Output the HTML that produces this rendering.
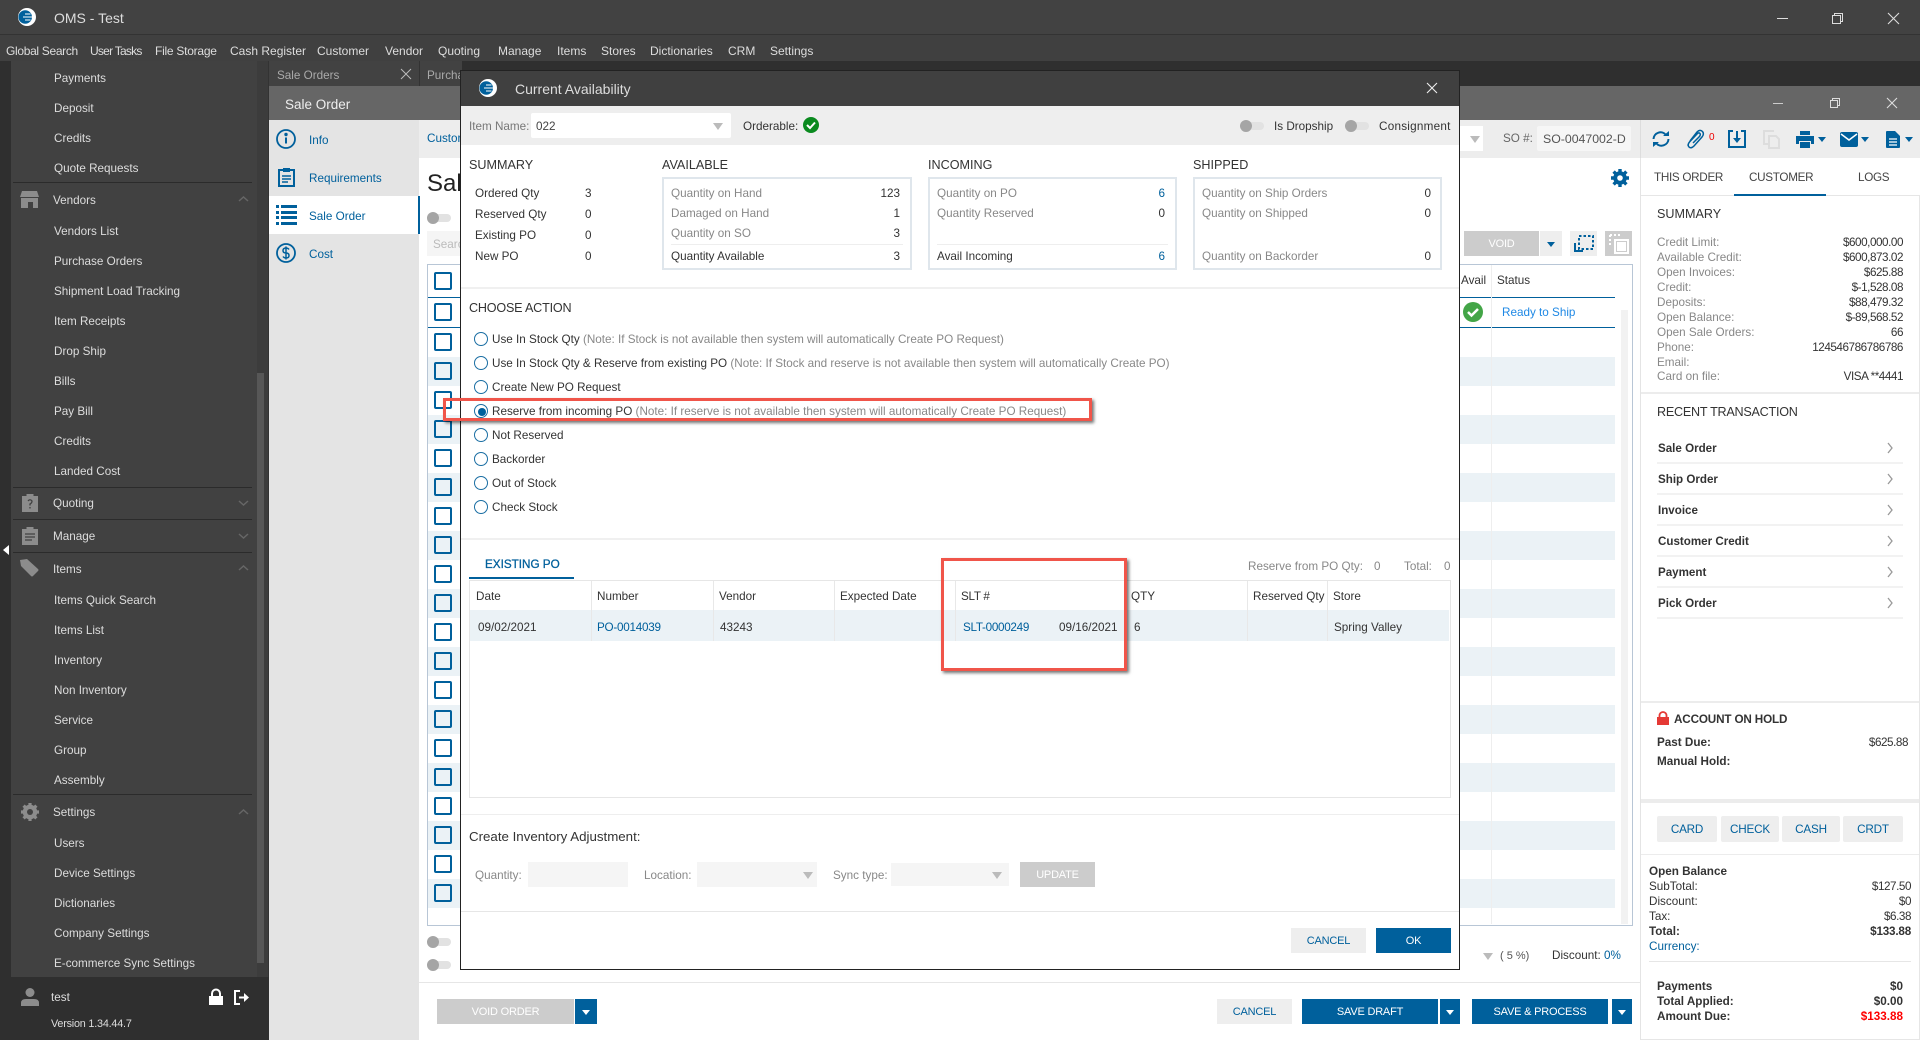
<!DOCTYPE html>
<html><head><meta charset="utf-8"><title>OMS - Test</title>
<style>
html,body{margin:0;padding:0;width:1920px;height:1040px;overflow:hidden;background:#fff;font-family:"Liberation Sans",sans-serif;font-size:12px;color:#333}
.b{position:absolute}
.t{position:absolute;white-space:nowrap;line-height:16px;font-size:11.7px;margin-top:1px}
.s{color:#ddd}
.g{color:#888}
.bl{color:#00609c}
.h{font-size:12.6px;color:#333;margin-top:0}
.bd{font-weight:bold;color:#333}
.v{letter-spacing:-.45px}
.n{font-size:12px;margin-top:0}
.c{text-align:center;line-height:27px;position:absolute;white-space:nowrap;font-size:11px;letter-spacing:-.2px}
.cb{position:absolute;left:434px;width:14px;height:14px;border:2px solid #00609c;border-radius:2px;background:transparent}
.st{position:absolute;left:428px;width:1187px;height:29px;background:#ebf2f6}
.tg{position:absolute;width:24px;height:8px;background:#e2e2e2;border-radius:4px}
.tg:before{content:"";position:absolute;left:0;top:-2px;width:12px;height:12px;border-radius:6px;background:#a5a5a5}
.r{position:absolute;left:474px;width:12px;height:12px;border:1.5px solid #1a6ea3;border-radius:50%;background:#fff}
.rt{font-weight:bold;font-size:11.6px;color:#333}
.rl{position:absolute;left:1657px;width:246px;height:2px;background:#f2f2f2}
svg{position:absolute;overflow:visible}
</style></head><body>

<!-- top bars -->
<div class="b" style="left:0;top:0;width:1920px;height:34px;background:#424242"></div>
<div class="b" style="left:0;top:34px;width:1920px;height:1px;background:#333"></div>
<div class="b" style="left:0;top:35px;width:1920px;height:26px;background:#404040"></div>
<div class="b" style="left:0;top:61px;width:1920px;height:25px;background:#2f2f2f"></div>
<svg style="left:18px;top:8px" width="18" height="18" viewBox="0 0 18 18"><circle cx="9" cy="9" r="9" fill="#fff"/><circle cx="7.200" cy="9" r="6.800" fill="#00609c"/><path d="M7 6h5.500M5 9h9M7 12h5.500" stroke="#fff" stroke-width="1.100"/></svg>
<div class="t" style="left:54px;top:10px;font-size:14px;color:#ddd;margin-top:0">OMS - Test</div>
<div class="b" style="left:1777px;top:18px;width:11px;height:1px;background:#ddd"></div>
<svg style="left:1832px;top:13px" width="11" height="11" fill="none" stroke="#ddd"><path d="M.5 2.500h8v8h-8zM2.500 2.500v-2h8v8h-2"/></svg>
<svg style="left:1888px;top:13px" width="11" height="11" stroke="#ddd" stroke-width="1.100"><path d="M0 0L11 11M11 0L0 11"/></svg>
<div class="t s n" style="left:6px;top:43px;letter-spacing:-.32px">Global Search</div>
<div class="t s n" style="left:90px;top:43px;letter-spacing:-.75px">User Tasks</div>
<div class="t s n" style="left:155px;top:43px;letter-spacing:-.25px">File Storage</div>
<div class="t s n" style="left:230px;top:43px">Cash Register</div>
<div class="t s n" style="left:317px;top:43px">Customer</div>
<div class="t s n" style="left:385px;top:43px">Vendor</div>
<div class="t s n" style="left:438px;top:43px">Quoting</div>
<div class="t s n" style="left:498px;top:43px">Manage</div>
<div class="t s n" style="left:557px;top:43px">Items</div>
<div class="t s n" style="left:601px;top:43px">Stores</div>
<div class="t s n" style="left:650px;top:43px">Dictionaries</div>
<div class="t s n" style="left:728px;top:43px">CRM</div>
<div class="t s n" style="left:770px;top:43px">Settings</div>

<!-- sidebar -->
<div class="b" style="left:0;top:61px;width:269px;height:979px;background:#414141"></div>
<div class="b" style="left:0;top:61px;width:11px;height:979px;background:#2f2f2f"></div>
<div class="b" style="left:257px;top:61px;width:12px;height:916px;background:#3c3c3c"></div>
<div class="b" style="left:257px;top:373px;width:7px;height:590px;background:#575757"></div>
<div class="b" style="left:268px;top:61px;width:1px;height:979px;background:#333"></div>
<div class="b" style="left:11px;top:977px;width:258px;height:63px;background:#2f2f2f"></div>
<div class="b" style="left:0;top:545px;width:0;height:0;border:5px solid transparent;border-right:6px solid #fff;border-left:0;margin-left:3px"></div>
<div class="b" style="left:13px;top:182px;width:239px;height:1px;background:#2b2b2b"></div>
<div class="b" style="left:13px;top:794px;width:239px;height:1px;background:#2b2b2b"></div>
<div class="t s" style="left:54px;top:70px">Payments</div>
<div class="t s" style="left:54px;top:100px">Deposit</div>
<div class="t s" style="left:54px;top:130px">Credits</div>
<div class="t s" style="left:54px;top:160px">Quote Requests</div>
<svg style="left:20px;top:191px" width="19" height="17" fill="#8c8c8c"><path d="M2 0h15l2 6H0zM1 7h17v10h-5v-6H8v6H1z"/></svg>
<div class="t s" style="left:53px;top:192px">Vendors</div>
<svg style="left:238px;top:196px" width="11" height="6" fill="none" stroke="#666" stroke-width="1.500"><path d="M1 5L5.500 1L10 5"/></svg>
<div class="t s" style="left:54px;top:223px">Vendors List</div>
<div class="t s" style="left:54px;top:253px">Purchase Orders</div>
<div class="t s" style="left:54px;top:283px">Shipment Load Tracking</div>
<div class="t s" style="left:54px;top:313px">Item Receipts</div>
<div class="t s" style="left:54px;top:343px">Drop Ship</div>
<div class="t s" style="left:54px;top:373px">Bills</div>
<div class="t s" style="left:54px;top:403px">Pay Bill</div>
<div class="t s" style="left:54px;top:433px">Credits</div>
<div class="t s" style="left:54px;top:463px">Landed Cost</div>
<div class="b" style="left:13px;top:487px;width:239px;height:1px;background:#2b2b2b"></div>
<svg style="left:22px;top:494px" width="16" height="18" fill="#8c8c8c"><path d="M0 2h4.500V0h7v2H16v16H0z"/><path d="M6 7q2-2.500 4 0q0 2-2 3v1.500M8 13v1.500" stroke="#414141" fill="none" stroke-width="1.300"/></svg>
<div class="t s" style="left:53px;top:495px">Quoting</div>
<svg style="left:238px;top:500px" width="11" height="6" fill="none" stroke="#666" stroke-width="1.500"><path d="M1 1L5.500 5L10 1"/></svg>
<div class="b" style="left:13px;top:519px;width:239px;height:1px;background:#2b2b2b"></div>
<svg style="left:22px;top:527px" width="16" height="18" fill="#8c8c8c"><path d="M0 2h4.500V0h7v2H16v16H0z"/><path d="M3 7h10M3 10h10M3 13h7" stroke="#414141" stroke-width="1.300"/></svg>
<div class="t s" style="left:53px;top:528px">Manage</div>
<svg style="left:238px;top:533px" width="11" height="6" fill="none" stroke="#666" stroke-width="1.500"><path d="M1 1L5.500 5L10 1"/></svg>
<div class="b" style="left:13px;top:552px;width:239px;height:1px;background:#2b2b2b"></div>
<svg style="left:20px;top:559px" width="19" height="18" fill="#8c8c8c"><path d="M0 1l7-1 11 10q1 1 0 2l-5 5q-1 1-2 0L1 7z"/></svg>
<div class="t s" style="left:53px;top:561px">Items</div>
<svg style="left:238px;top:565px" width="11" height="6" fill="none" stroke="#666" stroke-width="1.500"><path d="M1 5L5.500 1L10 5"/></svg>
<div class="t s" style="left:54px;top:592px">Items Quick Search</div>
<div class="t s" style="left:54px;top:622px">Items List</div>
<div class="t s" style="left:54px;top:652px">Inventory</div>
<div class="t s" style="left:54px;top:682px">Non Inventory</div>
<div class="t s" style="left:54px;top:712px">Service</div>
<div class="t s" style="left:54px;top:742px">Group</div>
<div class="t s" style="left:54px;top:772px">Assembly</div>
<svg style="left:21px;top:803px" width="18" height="18" viewBox="0 0 18 18"><circle cx="9" cy="9" r="5.500" fill="none" stroke="#8c8c8c" stroke-width="3.500"/><path d="M9 0v18M0 9h18M2.600 2.600l12.800 12.800M15.400 2.600L2.600 15.400" stroke="#8c8c8c" stroke-width="3.200"/><circle cx="9" cy="9" r="3" fill="#414141"/></svg>
<div class="t s" style="left:53px;top:804px">Settings</div>
<svg style="left:238px;top:809px" width="11" height="6" fill="none" stroke="#666" stroke-width="1.500"><path d="M1 5L5.500 1L10 5"/></svg>
<div class="t s" style="left:54px;top:835px">Users</div>
<div class="t s" style="left:54px;top:865px">Device Settings</div>
<div class="t s" style="left:54px;top:895px">Dictionaries</div>
<div class="t s" style="left:54px;top:925px">Company Settings</div>
<div class="t s" style="left:54px;top:955px">E-commerce Sync Settings</div>
<svg style="left:21px;top:988px" width="18" height="18" fill="#8c8c8c"><circle cx="9" cy="4.500" r="4.500"/><path d="M0 18v-3q0-4 5-4h8q5 0 5 4v3z"/></svg>
<div class="t" style="left:51px;top:989px;color:#ddd">test</div>
<div class="t" style="left:51px;top:1015px;color:#ddd;font-size:10.800px;letter-spacing:-.2px">Version 1.34.44.7</div>
<svg style="left:209px;top:989px" width="14" height="16" fill="#fff"><path d="M0 7h14v9H0z"/><path d="M3 7V4.500a4 4 0 0 1 8 0V7" fill="none" stroke="#fff" stroke-width="2"/></svg>
<svg style="left:234px;top:990px" width="16" height="15" fill="none" stroke="#fff" stroke-width="2"><path d="M6 1H1v13h5M5 7.500h7"/><path d="M10 3l5 4.500-5 4.500z" fill="#fff" stroke="none"/></svg>

<!-- tabs -->
<div class="b" style="left:269px;top:61px;width:150px;height:25px;background:#424242"></div>
<div class="b" style="left:419px;top:61px;width:42px;height:25px;background:#424242;border-left:1px solid #333"></div>
<div class="t" style="left:277px;top:67px;color:#aaa">Sale Orders</div>
<svg style="left:401px;top:69px" width="10" height="10" stroke="#bbb"><path d="M0 0L10 10M10 0L0 10"/></svg>
<div class="t" style="left:427px;top:67px;color:#aaa">Purcha</div>

<!-- window header -->
<div class="b" style="left:269px;top:86px;width:1651px;height:34px;background:#666"></div>
<div class="t" style="left:285px;top:96px;color:#eee;font-size:13.500px">Sale Order</div>
<div class="b" style="left:1773px;top:103px;width:10px;height:1px;background:#ccc"></div>
<svg style="left:1830px;top:98px" width="10" height="10" fill="none" stroke="#ddd"><path d="M.5 2.500h7v7h-7zM2.500 2.500v-2h7v7h-2"/></svg>
<svg style="left:1887px;top:98px" width="10" height="10" stroke="#ddd" stroke-width="1.100"><path d="M0 0L10 10M10 0L0 10"/></svg>

<!-- left nav -->
<div class="b" style="left:269px;top:120px;width:150px;height:920px;background:#e4e4e4"></div>
<div class="b" style="left:269px;top:196px;width:149px;height:38px;background:#fff;border-right:2px solid #00609c"></div>
<svg style="left:276px;top:129px" width="20" height="20" viewBox="0 0 20 20" fill="none" stroke="#00609c" stroke-width="1.800"><circle cx="10" cy="10" r="9"/><path d="M10 8.500v6" stroke-width="2"/><circle cx="10" cy="5.500" r=".8" fill="#00609c"/></svg>
<div class="t bl" style="left:309px;top:132px">Info</div>
<svg style="left:278px;top:167px" width="17" height="20" viewBox="0 0 17 20" fill="none" stroke="#00609c" stroke-width="2"><path d="M5 3H1v16h15V3h-4"/><path d="M5 1h7v4H5z" fill="#00609c" stroke="none"/><path d="M4 9h9M4 12h9M4 15h6" stroke-width="1.500"/></svg>
<div class="t bl" style="left:309px;top:170px">Requirements</div>
<svg style="left:276px;top:205px" width="21" height="20" fill="#00609c"><path d="M0 0h3v3H0zM5 0h16v3H5zM0 6h3v3H0zM5 6h16v3H5zM0 11h3v3H0zM5 11h16v3H5zM0 17h3v3H0zM5 17h16v3H5z"/></svg>
<div class="t bl" style="left:309px;top:208px">Sale Order</div>
<svg style="left:276px;top:243px" width="20" height="20" viewBox="0 0 20 20" fill="none" stroke="#00609c" stroke-width="1.800"><circle cx="10" cy="10" r="9"/><path d="M13 6.500Q12 5 10 5Q7 5 7 7.500Q7 10 10 10Q13 10 13 12.500Q13 15 10 15Q8 15 7 13.500M10 3.500v13" stroke-width="1.500"/></svg>
<div class="t bl" style="left:309px;top:246px">Cost</div>

<!-- main behind -->
<div class="b" style="left:419px;top:120px;width:1221px;height:38px;background:#ededed"></div>
<div class="t bl" style="left:427px;top:130px">Custor</div>
<div class="t" style="left:427px;top:168px;font-size:24px;line-height:32px;color:#222;margin-top:0">Sal</div>
<div class="tg" style="left:427px;top:214px"></div>
<div class="b" style="left:427px;top:231px;width:40px;height:25px;background:#f5f5f5"></div>
<div class="t" style="left:433px;top:236px;color:#bbb">Searc</div>
<div class="b" style="left:427px;top:264px;width:1204px;height:660px;border:1px solid #b8c6d6;background:#fff"></div>
<div class="b" style="left:428px;top:297px;width:1187px;height:1px;background:#00609c"></div>
<div class="b" style="left:428px;top:327px;width:1187px;height:1px;background:#00609c"></div>
<div class="st" style="top:357px"></div><div class="st" style="top:415px"></div><div class="st" style="top:473px"></div><div class="st" style="top:531px"></div><div class="st" style="top:589px"></div><div class="st" style="top:647px"></div><div class="st" style="top:705px"></div><div class="st" style="top:763px"></div><div class="st" style="top:821px"></div><div class="st" style="top:879px"></div>
<div class="b" style="left:1491px;top:265px;width:1px;height:659px;background:#eee"></div>
<div class="cb" style="top:272px"></div><div class="cb" style="top:303px"></div><div class="cb" style="top:333px"></div><div class="cb" style="top:362px"></div><div class="cb" style="top:391px"></div><div class="cb" style="top:420px"></div><div class="cb" style="top:449px"></div><div class="cb" style="top:478px"></div><div class="cb" style="top:507px"></div><div class="cb" style="top:536px"></div><div class="cb" style="top:565px"></div><div class="cb" style="top:594px"></div><div class="cb" style="top:623px"></div><div class="cb" style="top:652px"></div><div class="cb" style="top:681px"></div><div class="cb" style="top:710px"></div><div class="cb" style="top:739px"></div><div class="cb" style="top:768px"></div><div class="cb" style="top:797px"></div><div class="cb" style="top:826px"></div><div class="cb" style="top:855px"></div><div class="cb" style="top:884px"></div>
<div class="tg" style="left:427px;top:938px"></div>
<div class="tg" style="left:427px;top:961px"></div>
<div class="t" style="left:1461px;top:272px;color:#333">Avail</div>
<div class="t" style="left:1497px;top:272px;color:#333">Status</div>
<svg style="left:1463px;top:302px" width="20" height="20"><circle cx="10" cy="10" r="10" fill="#43a547"/><path d="M5 10l3.500 3.500L15 7" fill="none" stroke="#fff" stroke-width="2.500"/></svg>
<div class="t" style="left:1502px;top:304px;color:#1e88e5">Ready to Ship</div>
<div class="b" style="left:1621px;top:310px;width:7px;height:614px;background:#f2f2f2"></div>
<div class="b" style="left:1460px;top:126px;width:23px;height:25px;background:#fff"></div>
<div class="b" style="left:1470px;top:136px;width:0;height:0;border:5px solid transparent;border-top:7px solid #bbb"></div>
<div class="t" style="left:1503px;top:130px;color:#666">SO #:</div>
<div class="b" style="left:1537px;top:126px;width:94px;height:25px;background:#f6f6f6;border-radius:2px"></div>
<div class="t" style="left:1543px;top:130px;color:#555;font-size:12.300px">SO-0047002-D</div>
<svg style="left:1611px;top:169px" width="18" height="18" viewBox="0 0 18 18"><path d="M9 0v18M0 9h18M2.600 2.600l12.800 12.800M15.400 2.600L2.600 15.400" stroke="#00609c" stroke-width="3.400"/><circle cx="9" cy="9" r="5" fill="none" stroke="#00609c" stroke-width="3.500"/><circle cx="9" cy="9" r="2.800" fill="#fff"/></svg>
<div class="b c" style="left:1464px;top:231px;width:75px;height:25px;background:#ccc;color:#fff">VOID</div>
<div class="b" style="left:1540px;top:231px;width:22px;height:25px;background:#eee"></div>
<div class="b" style="left:1547px;top:242px;width:0;height:0;border:4px solid transparent;border-top:5px solid #00609c"></div>
<div class="b" style="left:1570px;top:231px;width:27px;height:25px;background:#eee"></div>
<svg style="left:1574px;top:234px" width="20" height="19" fill="none" stroke="#00609c" stroke-width="2"><path d="M1 9v8h8" /><path d="M5 2h14v13H5z" stroke-dasharray="2.500 2"/></svg>
<div class="b" style="left:1605px;top:231px;width:27px;height:25px;background:#ccc"></div>
<svg style="left:1609px;top:234px" width="20" height="20" fill="none" stroke="#fff" stroke-width="2"><path d="M1 1h12" stroke-dasharray="2 2"/><path d="M1 1v12" stroke-dasharray="2 2"/><path d="M6 6h13v13H6z"/><path d="M8 8h9v9H8z" fill="#fff" stroke="none"/></svg>

<!-- bottom behind -->
<div class="b" style="left:419px;top:982px;width:1221px;height:1px;background:#e6e6e6"></div>
<div class="t" style="left:1500px;top:947px;color:#555;font-size:11px">( 5 %)</div>
<div class="b" style="left:1483px;top:953px;width:0;height:0;border:5px solid transparent;border-top:7px solid #bbb"></div>
<div class="t" style="left:1552px;top:947px;color:#333">Discount: <span class="bl">0%</span></div>
<div class="b c" style="left:437px;top:999px;width:137px;height:25px;background:#ccc;color:#fff">VOID ORDER</div>
<div class="b" style="left:575px;top:999px;width:22px;height:25px;background:#00609c"></div>
<div class="b" style="left:582px;top:1010px;width:0;height:0;border:4px solid transparent;border-top:5px solid #fff"></div>
<div class="b c bl" style="left:1217px;top:999px;width:75px;height:25px;background:#eee">CANCEL</div>
<div class="b c" style="left:1302px;top:999px;width:136px;height:25px;background:#00609c;color:#fff">SAVE DRAFT</div>
<div class="b" style="left:1440px;top:999px;width:20px;height:25px;background:#00609c"></div>
<div class="b" style="left:1446px;top:1010px;width:0;height:0;border:4px solid transparent;border-top:5px solid #fff"></div>
<div class="b c" style="left:1472px;top:999px;width:136px;height:25px;background:#00609c;color:#fff">SAVE &amp; PROCESS</div>
<div class="b" style="left:1612px;top:999px;width:20px;height:25px;background:#00609c"></div>
<div class="b" style="left:1618px;top:1010px;width:0;height:0;border:4px solid transparent;border-top:5px solid #fff"></div>

<!-- right panel -->
<div class="b" style="left:1640px;top:120px;width:280px;height:920px;background:#fff;border-left:1px solid #e4e4e4;box-sizing:border-box"></div>
<div class="b" style="left:1640px;top:120px;width:280px;height:38px;background:#ededed;border-left:1px solid #ddd;box-sizing:border-box"></div>
<svg style="left:1652px;top:131px" width="18" height="16" fill="none" stroke="#00609c" stroke-width="2"><path d="M1.500 8A7 7 0 0 1 14 4M16.500 8A7 7 0 0 1 4 12"/><path d="M11 5h6V0zM7 11H1v5z" fill="#00609c" stroke="none"/></svg>
<svg style="left:1687px;top:129px" width="18" height="20" fill="none" stroke="#00609c" stroke-width="1.500"><path d="M3 12L10 3Q13 0 15.500 2.500Q17.500 5 15 8L7 17Q4 20 2 18Q0 16 2.500 13L10 5Q12 3 13 4.500Q14 6 12 8L6 14"/></svg>
<div class="t" style="left:1709px;top:129px;color:#e00;font-size:10px">0</div>
<svg style="left:1728px;top:130px" width="18" height="18" fill="none" stroke="#00609c" stroke-width="2"><path d="M5 1H1v16h16V1h-4M9 1v10"/><path d="M5 8l4 5 4-5z" fill="#00609c" stroke="none"/></svg>
<svg style="left:1763px;top:130px" width="17" height="19" fill="none" stroke="#ddd" stroke-width="2"><path d="M11 1H1v13h4M6 6h7l3 3v9H6z"/></svg>
<svg style="left:1796px;top:131px" width="18" height="17" fill="#00609c"><path d="M4 0h10v4H4zM0 5h18v8h-3v-3H3v3H0zM4 11h10v6H4z"/></svg>
<div class="b" style="left:1818px;top:137px;width:0;height:0;border:4px solid transparent;border-top:5px solid #00609c"></div>
<svg style="left:1840px;top:132px" width="18" height="15" fill="#00609c"><rect width="18" height="15" rx="2"/><path d="M1 2l8 6 8-6" fill="none" stroke="#fff" stroke-width="1.500"/></svg>
<div class="b" style="left:1861px;top:137px;width:0;height:0;border:4px solid transparent;border-top:5px solid #00609c"></div>
<svg style="left:1886px;top:131px" width="14" height="17" fill="#00609c"><path d="M1 0h8l5 5v11q0 1-1 1H1q-1 0-1-1V1q0-1 1-1z"/><path d="M3 8h8M3 11h8M3 14h8" stroke="#fff" stroke-width="1.300"/></svg>
<div class="b" style="left:1905px;top:137px;width:0;height:0;border:4px solid transparent;border-top:5px solid #00609c"></div>
<div class="t" style="left:1654px;top:169px;color:#444;letter-spacing:-.3px">THIS ORDER</div>
<div class="t" style="left:1749px;top:169px;color:#444;letter-spacing:-.3px">CUSTOMER</div>
<div class="t" style="left:1858px;top:169px;color:#444;letter-spacing:-.3px">LOGS</div>
<div class="b" style="left:1641px;top:195px;width:279px;height:1px;background:#e6e6e6"></div>
<div class="b" style="left:1734px;top:194px;width:92px;height:2px;background:#00609c"></div>
<div class="t h" style="left:1657px;top:206px">SUMMARY</div>
<div class="t g" style="left:1657px;top:234px">Credit Limit:</div><div class="t v" style="right:17px;top:234px">$600,000.00</div>
<div class="t g" style="left:1657px;top:249px">Available Credit:</div><div class="t v" style="right:17px;top:249px">$600,873.02</div>
<div class="t g" style="left:1657px;top:264px">Open Invoices:</div><div class="t v" style="right:17px;top:264px">$625.88</div>
<div class="t g" style="left:1657px;top:279px">Credit:</div><div class="t v" style="right:17px;top:279px">$-1,528.08</div>
<div class="t g" style="left:1657px;top:294px">Deposits:</div><div class="t v" style="right:17px;top:294px">$88,479.32</div>
<div class="t g" style="left:1657px;top:309px">Open Balance:</div><div class="t v" style="right:17px;top:309px">$-89,568.52</div>
<div class="t g" style="left:1657px;top:324px">Open Sale Orders:</div><div class="t v" style="right:17px;top:324px">66</div>
<div class="t g" style="left:1657px;top:339px">Phone:</div><div class="t v" style="right:17px;top:339px">124546786786786</div>
<div class="t g" style="left:1657px;top:354px">Email:</div>
<div class="t g" style="left:1657px;top:368px">Card on file:</div><div class="t v" style="right:17px;top:368px">VISA **4441</div>
<div class="b" style="left:1641px;top:392px;width:279px;height:2px;background:#ececec"></div>
<div class="t h" style="left:1657px;top:404px;letter-spacing:-.25px">RECENT TRANSACTION</div>
<div class="t rt" style="left:1658px;top:440px">Sale Order</div>
<div class="t rt" style="left:1658px;top:471px">Ship Order</div>
<div class="t rt" style="left:1658px;top:502px">Invoice</div>
<div class="t rt" style="left:1658px;top:533px">Customer Credit</div>
<div class="t rt" style="left:1658px;top:564px">Payment</div>
<div class="t rt" style="left:1658px;top:595px">Pick Order</div>
<div class="rl" style="top:462px"></div>
<div class="rl" style="top:493px"></div>
<div class="rl" style="top:524px"></div>
<div class="rl" style="top:555px"></div>
<div class="rl" style="top:586px"></div>
<div class="rl" style="top:617px"></div>
<svg style="left:1887px;top:443px" width="6" height="10" fill="none" stroke="#999" stroke-width="1.300"><path d="M1 0l4 5-4 5"/></svg>
<svg style="left:1887px;top:474px" width="6" height="10" fill="none" stroke="#999" stroke-width="1.300"><path d="M1 0l4 5-4 5"/></svg>
<svg style="left:1887px;top:505px" width="6" height="10" fill="none" stroke="#999" stroke-width="1.300"><path d="M1 0l4 5-4 5"/></svg>
<svg style="left:1887px;top:536px" width="6" height="10" fill="none" stroke="#999" stroke-width="1.300"><path d="M1 0l4 5-4 5"/></svg>
<svg style="left:1887px;top:567px" width="6" height="10" fill="none" stroke="#999" stroke-width="1.300"><path d="M1 0l4 5-4 5"/></svg>
<svg style="left:1887px;top:598px" width="6" height="10" fill="none" stroke="#999" stroke-width="1.300"><path d="M1 0l4 5-4 5"/></svg>
<div class="b" style="left:1641px;top:701px;width:279px;height:2px;background:#ececec"></div>
<svg style="left:1657px;top:712px" width="12" height="13" fill="#e53935"><path d="M0 5h12v8H0z"/><path d="M2.500 5V3.500a3.500 3.500 0 0 1 7 0V5" fill="none" stroke="#e53935" stroke-width="1.800"/></svg>
<div class="t bd" style="left:1674px;top:711px;letter-spacing:-.15px">ACCOUNT ON HOLD</div>
<div class="t bd" style="left:1657px;top:734px">Past Due:</div><div class="t v" style="right:12px;top:734px">$625.88</div>
<div class="t bd" style="left:1657px;top:753px">Manual Hold:</div>
<div class="b" style="left:1641px;top:799px;width:279px;height:4px;background:#ececec"></div>
<div class="b c bl" style="left:1657px;top:816px;width:60px;height:26px;background:#eee;border-radius:2px;font-size:11.700px;line-height:27px">CARD</div>
<div class="b c bl" style="left:1721px;top:816px;width:58px;height:26px;background:#eee;border-radius:2px;font-size:11.700px;line-height:27px">CHECK</div>
<div class="b c bl" style="left:1782px;top:816px;width:58px;height:26px;background:#eee;border-radius:2px;font-size:11.700px;line-height:27px">CASH</div>
<div class="b c bl" style="left:1843px;top:816px;width:60px;height:26px;background:#eee;border-radius:2px;font-size:11.700px;line-height:27px">CRDT</div>
<div class="b" style="left:1641px;top:854px;width:279px;height:1px;background:#ececec"></div>
<div class="t bd" style="left:1649px;top:863px">Open Balance</div>
<div class="t" style="left:1649px;top:878px">SubTotal:</div><div class="t v" style="right:9px;top:878px">$127.50</div>
<div class="t" style="left:1649px;top:893px">Discount:</div><div class="t v" style="right:9px;top:893px">$0</div>
<div class="t" style="left:1649px;top:908px">Tax:</div><div class="t v" style="right:9px;top:908px">$6.38</div>
<div class="t bd" style="left:1649px;top:923px">Total:</div><div class="t bd" style="right:9px;top:923px;letter-spacing:-.2px">$133.88</div>
<div class="t bl" style="left:1649px;top:938px">Currency:</div>
<div class="b" style="left:1649px;top:961px;width:262px;height:1px;background:#e6e6e6"></div>
<div class="t bd" style="left:1657px;top:978px">Payments</div><div class="t bd" style="right:17px;top:978px">$0</div>
<div class="t bd" style="left:1657px;top:993px">Total Applied:</div><div class="t bd" style="right:17px;top:993px">$0.00</div>
<div class="t bd" style="left:1657px;top:1008px">Amount Due:</div><div class="t bd" style="right:17px;top:1008px;color:#f00">$133.88</div>
<div class="b" style="left:1641px;top:1039px;width:279px;height:1px;background:#e6e6e6"></div>
<div class="b" style="left:1919px;top:196px;width:1px;height:844px;background:#e6e6e6"></div>

<!-- MODAL -->
<div class="b" style="left:460px;top:70px;width:1000px;height:900px;background:#fff;border:1px solid #222;box-sizing:border-box"></div>
<div class="b" style="left:461px;top:71px;width:998px;height:35px;background:#404040"></div>
<div class="b" style="left:461px;top:106px;width:998px;height:39px;background:#eee"></div>
<svg style="left:479px;top:79px" width="18" height="18" viewBox="0 0 18 18"><circle cx="9" cy="9" r="9" fill="#fff"/><circle cx="7.200" cy="9" r="6.800" fill="#00609c"/><path d="M7 6h5.500M5 9h9M7 12h5.500" stroke="#fff" stroke-width="1.100"/></svg>
<div class="t" style="left:515px;top:81px;color:#ddd;font-size:14px;margin-top:0">Current Availability</div>
<svg style="left:1427px;top:83px" width="10" height="10" stroke="#eee" stroke-width="1.100"><path d="M0 0L10 10M10 0L0 10"/></svg>
<div class="t" style="left:469px;top:118px;color:#777">Item Name:</div>
<div class="b" style="left:531px;top:113px;width:200px;height:25px;background:#fff;border-radius:2px"></div>
<div class="t" style="left:536px;top:118px;color:#444">022</div>
<div class="b" style="left:713px;top:123px;width:0;height:0;border:5px solid transparent;border-top:7px solid #bbb"></div>
<div class="t" style="left:743px;top:118px;color:#333">Orderable:</div>
<svg style="left:803px;top:117px" width="16" height="16"><circle cx="8" cy="8" r="8" fill="#0a8a1f"/><path d="M4 8l3 3 5-5.500" fill="none" stroke="#fff" stroke-width="2"/></svg>
<div class="tg" style="left:1240px;top:122px"></div>
<div class="t" style="left:1274px;top:118px;color:#333">Is Dropship</div>
<div class="tg" style="left:1345px;top:122px"></div>
<div class="t" style="left:1379px;top:118px;color:#333;letter-spacing:.25px">Consignment</div>

<div class="t h" style="left:469px;top:157px">SUMMARY</div>
<div class="t h" style="left:662px;top:157px">AVAILABLE</div>
<div class="t h" style="left:928px;top:157px">INCOMING</div>
<div class="t h" style="left:1193px;top:157px">SHIPPED</div>

<div class="t" style="left:475px;top:185px">Ordered Qty</div><div class="t" style="left:585px;top:185px">3</div>
<div class="t" style="left:475px;top:206px">Reserved Qty</div><div class="t" style="left:585px;top:206px">0</div>
<div class="t" style="left:475px;top:227px">Existing PO</div><div class="t" style="left:585px;top:227px">0</div>
<div class="t" style="left:475px;top:248px">New PO</div><div class="t" style="left:585px;top:248px">0</div>

<div class="b" style="left:662px;top:177px;width:246px;height:89px;border:2px solid #dfe6ec"></div>
<div class="t g" style="left:671px;top:185px">Quantity on Hand</div><div class="t" style="right:1020px;top:185px">123</div>
<div class="t g" style="left:671px;top:205px">Damaged on Hand</div><div class="t" style="right:1020px;top:205px">1</div>
<div class="t g" style="left:671px;top:225px">Quantity on SO</div><div class="t" style="right:1020px;top:225px">3</div>
<div class="b" style="left:671px;top:244px;width:232px;height:1px;background:#eee"></div>
<div class="t" style="left:671px;top:248px">Quantity Available</div><div class="t" style="right:1020px;top:248px">3</div>

<div class="b" style="left:928px;top:177px;width:245px;height:89px;border:2px solid #dfe6ec"></div>
<div class="t g" style="left:937px;top:185px">Quantity on PO</div><div class="t bl" style="right:755px;top:185px">6</div>
<div class="t g" style="left:937px;top:205px">Quantity Reserved</div><div class="t" style="right:755px;top:205px">0</div>
<div class="b" style="left:937px;top:244px;width:231px;height:1px;background:#eee"></div>
<div class="t" style="left:937px;top:248px">Avail Incoming</div><div class="t bl" style="right:755px;top:248px">6</div>

<div class="b" style="left:1193px;top:177px;width:245px;height:89px;border:2px solid #dfe6ec"></div>
<div class="t g" style="left:1202px;top:185px">Quantity on Ship Orders</div><div class="t" style="right:489px;top:185px">0</div>
<div class="t g" style="left:1202px;top:205px">Quantity on Shipped</div><div class="t" style="right:489px;top:205px">0</div>
<div class="t g" style="left:1202px;top:248px">Quantity on Backorder</div><div class="t" style="right:489px;top:248px">0</div>

<div class="b" style="left:461px;top:287px;width:998px;height:2px;background:#f0f0f0"></div>
<div class="t h" style="left:469px;top:300px;letter-spacing:-.2px">CHOOSE ACTION</div>

<div class="r" style="top:332px"></div><div class="t" style="left:492px;top:331px">Use In Stock Qty <span class="g">(Note: If Stock is not available then system will automatically Create PO Request)</span></div>
<div class="r" style="top:356px"></div><div class="t" style="left:492px;top:355px">Use In Stock Qty &amp; Reserve from existing PO <span class="g">(Note: If Stock and reserve is not available then system will automatically Create PO)</span></div>
<div class="r" style="top:380px"></div><div class="t" style="left:492px;top:379px">Create New PO Request</div>
<div class="r" style="top:404px"></div><div class="b" style="left:477.500px;top:407.500px;width:8px;height:8px;border-radius:50%;background:#00609c"></div><div class="t" style="left:492px;top:403px">Reserve from incoming PO <span class="g">(Note: If reserve is not available then system will automatically Create PO Request)</span></div>
<div class="r" style="top:428px"></div><div class="t" style="left:492px;top:427px">Not Reserved</div>
<div class="r" style="top:452px"></div><div class="t" style="left:492px;top:451px">Backorder</div>
<div class="r" style="top:476px"></div><div class="t" style="left:492px;top:475px">Out of Stock</div>
<div class="r" style="top:500px"></div><div class="t" style="left:492px;top:499px">Check Stock</div>
<div class="b" style="left:443px;top:398px;width:643px;height:17px;border:3px solid #f0554a;box-shadow:2px 2px 3px rgba(0,0,0,.55)"></div>

<div class="b" style="left:461px;top:538px;width:998px;height:2px;background:#f0f0f0"></div>
<div class="t bl" style="left:485px;top:556px;-webkit-text-stroke:.3px #00609c">EXISTING PO</div>
<div class="b" style="left:469px;top:577px;width:105px;height:2px;background:#00609c"></div>
<div class="t g" style="left:1248px;top:558px">Reserve from PO Qty:</div>
<div class="t g" style="left:1374px;top:558px">0</div>
<div class="t g" style="left:1404px;top:558px">Total:</div>
<div class="t g" style="left:1444px;top:558px">0</div>

<div class="b" style="left:469px;top:580px;width:980px;height:216px;border:1px solid #e6e6e6"></div>
<div class="b" style="left:470px;top:610px;width:979px;height:31px;background:#ebf2f6"></div>
<div class="b" style="left:591px;top:581px;width:1px;height:60px;background:#e8e8e8"></div>
<div class="b" style="left:713px;top:581px;width:1px;height:60px;background:#e8e8e8"></div>
<div class="b" style="left:834px;top:581px;width:1px;height:60px;background:#e8e8e8"></div>
<div class="b" style="left:955px;top:581px;width:1px;height:60px;background:#e8e8e8"></div>
<div class="b" style="left:1247px;top:581px;width:1px;height:60px;background:#e8e8e8"></div>
<div class="b" style="left:1327px;top:581px;width:1px;height:60px;background:#e8e8e8"></div>
<div class="t" style="left:476px;top:588px">Date</div>
<div class="t" style="left:597px;top:588px">Number</div>
<div class="t" style="left:719px;top:588px">Vendor</div>
<div class="t" style="left:840px;top:588px">Expected Date</div>
<div class="t" style="left:961px;top:588px;letter-spacing:-.3px">SLT #</div>
<div class="t" style="left:1131px;top:588px">QTY</div>
<div class="t" style="left:1253px;top:588px">Reserved Qty</div>
<div class="t" style="left:1333px;top:588px">Store</div>
<div class="t" style="left:478px;top:619px">09/02/2021</div>
<div class="t bl" style="left:597px;top:619px;letter-spacing:-.25px">PO-0014039</div>
<div class="t" style="left:720px;top:619px">43243</div>
<div class="t bl" style="left:963px;top:619px;letter-spacing:-.3px">SLT-0000249</div>
<div class="t" style="left:1059px;top:619px">09/16/2021</div>
<div class="t" style="left:1134px;top:619px">6</div>
<div class="t" style="left:1334px;top:619px">Spring Valley</div>
<div class="b" style="left:941px;top:558px;width:180px;height:107px;border:3px solid #f0554a;box-shadow:2px 2px 3px rgba(0,0,0,.55)"></div>

<div class="b" style="left:461px;top:814px;width:998px;height:1px;background:#eee"></div>
<div class="t" style="left:469px;top:829px;color:#333;font-size:13.300px;margin-top:0">Create Inventory Adjustment:</div>
<div class="t g" style="left:475px;top:867px">Quantity:</div>
<div class="b" style="left:528px;top:862px;width:100px;height:25px;background:#f5f5f5"></div>
<div class="t g" style="left:644px;top:867px">Location:</div>
<div class="b" style="left:697px;top:862px;width:120px;height:25px;background:#f5f5f5"></div>
<div class="b" style="left:803px;top:872px;width:0;height:0;border:5px solid transparent;border-top:7px solid #bbb"></div>
<div class="t g" style="left:833px;top:867px">Sync type:</div>
<div class="b" style="left:891px;top:863px;width:118px;height:23px;background:#f5f5f5"></div>
<div class="b" style="left:992px;top:872px;width:0;height:0;border:5px solid transparent;border-top:7px solid #bbb"></div>
<div class="b c" style="left:1020px;top:862px;width:75px;height:25px;background:#ccc;color:#fff">UPDATE</div>
<div class="b" style="left:461px;top:911px;width:998px;height:1px;background:#e6e6e6"></div>
<div class="b c bl" style="left:1291px;top:928px;width:75px;height:25px;background:#eee">CANCEL</div>
<div class="b c" style="left:1376px;top:928px;width:75px;height:25px;background:#00609c;color:#fff">OK</div>

</body></html>
